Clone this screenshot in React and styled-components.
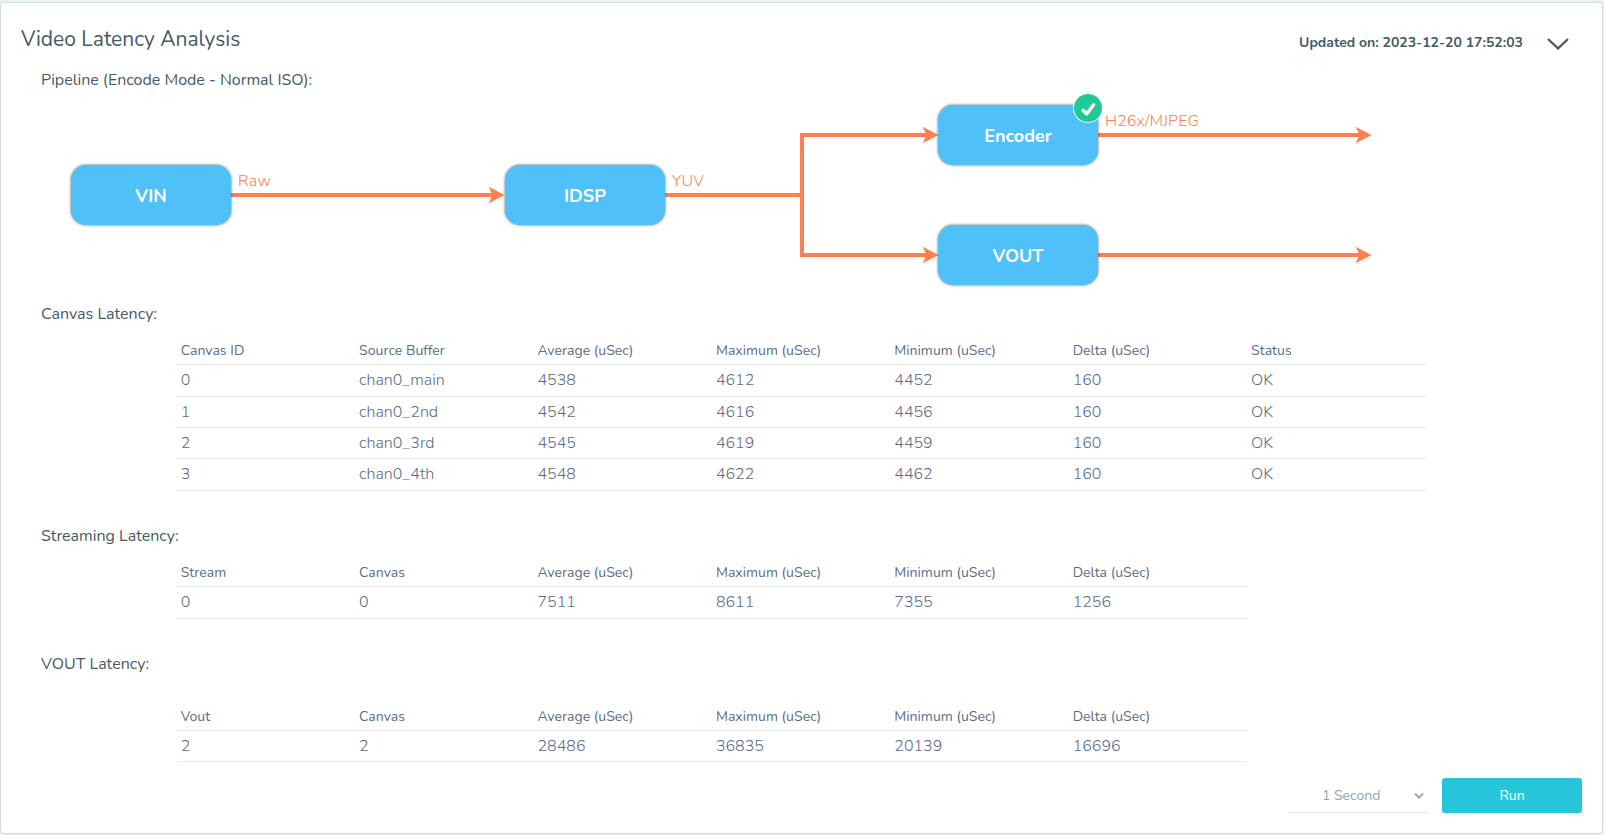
import React from 'react';
import styled, { createGlobalStyle } from 'styled-components';

const GlobalStyle = createGlobalStyle`
  *, *::before, *::after { box-sizing: border-box; }
  body {
    margin: 0;
    background: #e8f0f4;
    font-family: Nunito, Lato, "Open Sans", sans-serif;
    color: #455a64;
  }
`;

const Page = styled.main`
  height: 835px;
  padding: 2px 1px 1px 0;
`;

const Card = styled.section`
  display: flex;
  flex-direction: column;
  height: 832px;
  background: #fff;
  border: 1px solid #d3dde1;
  border-radius: 4px;
`;

const Header = styled.header`
  display: flex;
  justify-content: space-between;
  height: 65px;
  padding: 0 33px 0 20px;
`;

const Title = styled.h1`
  margin: 21px 0 0;
  font-size: 21px;
  line-height: 30px;
  font-weight: 400;
`;

const HeaderMeta = styled.div`
  display: flex;
  align-items: flex-start;
  gap: 24px;
  padding-top: 30px;
`;

const Updated = styled.span`
  font-size: 14px;
  line-height: 20px;
  font-weight: 700;
`;

const ToggleIcon = styled.svg`
  width: 22px;
  height: 12px;
  margin-top: 5px;
`;

const SectionTitle = styled.h2`
  margin: 0 0 0 40px;
  font-size: 16px;
  line-height: 24px;
  font-weight: 400;
`;

const Diagram = styled.div`
  position: relative;
  height: 210px;
`;

const Wires = styled.svg`
  position: absolute;
  inset: 0;
  width: 1400px;
  height: 210px;
`;

const Node = styled.div`
  position: absolute;
  left: ${(p) => p.$x}px;
  top: ${(p) => p.$y}px;
  display: flex;
  align-items: center;
  justify-content: center;
  width: 160px;
  height: 60px;
  padding-top: 1px;
  border-radius: 15px;
  background: #4fc1f8;
  box-shadow: 0 0 3px rgba(0, 0, 0, 0.6);
  color: #fff;
  font-size: 18px;
  font-weight: 700;
`;

const WireLabel = styled.span`
  position: absolute;
  left: ${(p) => p.$x}px;
  top: ${(p) => p.$y}px;
  color: #ff7f50;
  font-size: 16px;
  line-height: 20px;
  font-weight: 300;
  letter-spacing: ${(p) => p.$spacing || 0}px;
`;

const Badge = styled.svg`
  position: absolute;
  right: -5px;
  top: -12px;
  width: 30px;
  height: 30px;
`;

const Table = styled.div`
  width: ${(p) => p.$columns * 178.4}px;
  margin: ${(p) => p.$top}px 0 ${(p) => p.$bottom}px 176px;
  color: #5b6b86;
`;

const Row = styled.div`
  display: grid;
  grid-template-columns: repeat(${(p) => p.$columns}, 1fr);
  height: 31.4px;
  border-bottom: 1px solid #e6e8ea;
  font-size: 16px;
  line-height: 31.3px;
  font-weight: 300;
`;

const HeadRow = styled(Row)`
  height: 29px;
  font-size: 14px;
  line-height: 30px;
  font-weight: 400;
  letter-spacing: 0.04px;
`;

const Cell = styled.span`
  padding-left: 3.7px;
  white-space: nowrap;
`;

const Footer = styled.footer`
  display: flex;
  justify-content: flex-end;
  gap: 14px;
  padding-right: 20px;
`;

const Select = styled.div`
  display: flex;
  align-items: center;
  justify-content: space-between;
  width: 140px;
  height: 35px;
  padding: 2px 4px 0 34px;
  border-bottom: 1px solid #dfe4ea;
  border-radius: 2px;
  color: #90a4ae;
  font-size: 14px;
`;

const SelectIcon = styled.svg`
  width: 10px;
  height: 8px;
`;

const RunButton = styled.button`
  width: 140px;
  height: 35px;
  padding: 0;
  border: 0;
  border-radius: 3px;
  background: #26c6da;
  color: #fff;
  font-family: inherit;
  font-size: 14px;
`;

const Arrow = ({ x, y }) => (
  <path d={`M${x} ${y}l-15.8 -8.2l3.8 8.2l-3.8 8.2z`} fill="#ff7f50" />
);

function Pipeline() {
  return (
    <Diagram>
      <Wires viewBox="0 0 1400 210">
        <g fill="none" stroke="#ff7f50" strokeWidth="4">
          <path d="M230 103H494" />
          <path d="M664 103H801" />
          <path d="M927 43H801V163H927" />
          <path d="M1097 43H1360" />
          <path d="M1097 163H1360" />
        </g>
        <Arrow x={503.5} y={103} />
        <Arrow x={937.5} y={43} />
        <Arrow x={937.5} y={163} />
        <Arrow x={1370.5} y={43} />
        <Arrow x={1370.5} y={163} />
      </Wires>
      <Node $x={70} $y={73}>VIN</Node>
      <WireLabel $x={237} $y={79} $spacing={0.3}>Raw</WireLabel>
      <Node $x={504} $y={73}>IDSP</Node>
      <WireLabel $x={671} $y={79}>YUV</WireLabel>
      <Node $x={937} $y={13}>
        Encoder
        <Badge viewBox="0 0 30 30">
          <circle cx="15" cy="15" r="15" fill="#fff" />
          <circle cx="15" cy="15" r="14" fill="#20c997" />
          <path d="M10 17.2L13.6 20.9L20.6 11.8" fill="none" stroke="#fff" strokeWidth="3.4" strokeLinecap="round" strokeLinejoin="round" />
        </Badge>
      </Node>
      <WireLabel $x={1104} $y={19} $spacing={0.08}>H26x/MJPEG</WireLabel>
      <Node $x={937} $y={133}>VOUT</Node>
    </Diagram>
  );
}

function LatencyTable({ head, rows, top, bottom }) {
  return (
    <Table $columns={head.length} $top={top} $bottom={bottom}>
      <HeadRow $columns={head.length}>
        {head.map((h) => <Cell key={h}>{h}</Cell>)}
      </HeadRow>
      {rows.map((row) => (
        <Row key={row[0]} $columns={head.length}>
          {row.map((value, i) => <Cell key={i}>{value}</Cell>)}
        </Row>
      ))}
    </Table>
  );
}

const stats = ['Average (uSec)', 'Maximum (uSec)', 'Minimum (uSec)', 'Delta (uSec)'];

const canvasRows = [
  ['0', 'chan0_main', '4538', '4612', '4452', '160', 'OK'],
  ['1', 'chan0_2nd', '4542', '4616', '4456', '160', 'OK'],
  ['2', 'chan0_3rd', '4545', '4619', '4459', '160', 'OK'],
  ['3', 'chan0_4th', '4548', '4622', '4462', '160', 'OK'],
];

export default function App() {
  return (
    <Page>
      <GlobalStyle />
      <Card>
        <Header>
          <Title>Video Latency Analysis</Title>
          <HeaderMeta>
            <Updated>Updated on: 2023-12-20 17:52:03</Updated>
            <ToggleIcon viewBox="0 0 22 12">
              <path d="M1 1L11 10.4L21 1" fill="none" stroke="#455a64" strokeWidth="2.2" />
            </ToggleIcon>
          </HeaderMeta>
        </Header>
        <SectionTitle>Pipeline (Encode Mode - Normal ISO):</SectionTitle>
        <Pipeline />
        <SectionTitle>Canvas Latency:</SectionTitle>
        <LatencyTable head={['Canvas ID', 'Source Buffer', ...stats, 'Status']} rows={canvasRows} top={10.3} bottom={33.1} />
        <SectionTitle>Streaming Latency:</SectionTitle>
        <LatencyTable head={['Stream', 'Canvas', ...stats]} rows={[['0', '0', '7511', '8611', '7355', '1256']]} top={10.2} bottom={33.4} />
        <SectionTitle>VOUT Latency:</SectionTitle>
        <LatencyTable head={['Vout', 'Canvas', ...stats]} rows={[['2', '2', '28486', '36835', '20139', '16696']]} top={26} bottom={15.6} />
        <Footer>
          <Select>
            1 Second
            <SelectIcon viewBox="0 0 10 8">
              <path d="M1 1.6L5 5.6L9 1.6" fill="none" stroke="#90a4ae" strokeWidth="2" />
            </SelectIcon>
          </Select>
          <RunButton>Run</RunButton>
        </Footer>
      </Card>
    </Page>
  );
}
